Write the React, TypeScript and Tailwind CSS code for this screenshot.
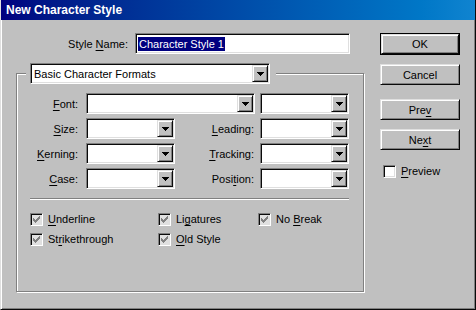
import React from 'react';

const sunken =
  'border border-t-[#808080] border-l-[#808080] border-b-white border-r-white shadow-[inset_1px_1px_0_#0a0a0a,inset_-1px_-1px_0_#dfdfdf]';
const raised =
  'border border-t-[#dfdfdf] border-l-[#dfdfdf] border-b-[#0a0a0a] border-r-[#0a0a0a] shadow-[inset_1px_1px_0_#fff,inset_-1px_-1px_0_#808080]';
const etched = 'border border-[#808080] shadow-[inset_1px_1px_0_#fff,1px_1px_0_#fff]';

const Key: React.FC<{ children: React.ReactNode }> = ({ children }) => (
  <u className="underline underline-offset-[2px]">{children}</u>
);

const Arrow = () => (
  <svg width="7" height="4" viewBox="0 0 7 4" shapeRendering="crispEdges">
    <path d="M0 0h7v1h-1v1h-1v1h-1v1h-1v-1h-1v-1h-1v-1h-1z" fill="#000" />
  </svg>
);

const Combo: React.FC<{ w: string; children?: React.ReactNode }> = ({ w, children }) => (
  <div className={`flex h-[21px] ${w} bg-white p-[1px] ${sunken}`}>
    <div className="flex flex-1 items-center overflow-hidden pl-[2px] whitespace-nowrap">{children}</div>
    <div className={`flex w-[16px] items-center justify-center bg-[#c0c0c0] ${raised}`}>
      <Arrow />
    </div>
  </div>
);

const CheckMark: React.FC<{ color: string }> = ({ color }) => (
  <svg width="7" height="7" viewBox="0 0 7 7" shapeRendering="crispEdges">
    <path
      d="M6 0h1v3h-1v1h-1v1h-1v1h-1v1h-1v-1h-1v-1h-1v-3h1v1h1v1h1v-1h1v-1h1v-1h1z"
      fill={color}
    />
  </svg>
);

const Check: React.FC<{ checked?: boolean; disabled?: boolean }> = ({ checked, disabled }) => (
  <div
    className={`flex h-[13px] w-[13px] shrink-0 items-center justify-center ${sunken} ${
      disabled ? 'bg-[#e0e0e0]' : 'bg-white'
    }`}
  >
    {checked && <CheckMark color={disabled ? '#808080' : '#000'} />}
  </div>
);

const CheckItem: React.FC<{ w: string; children: React.ReactNode }> = ({ w, children }) => (
  <div className={`flex h-[20px] ${w} items-center gap-[5px]`}>
    <Check checked disabled />
    <span>{children}</span>
  </div>
);

const Btn: React.FC<{ children: React.ReactNode; className?: string }> = ({ children, className = '' }) => (
  <div className={`flex h-[21px] w-[80px] items-center justify-center bg-[#c0c0c0] ${raised} ${className}`}>
    {children}
  </div>
);

export default function App() {
  return (
    <div className="h-[310px] w-[476px] overflow-hidden border-b border-l border-r border-b-[#0a0a0a] border-l-[#dfdfdf] border-r-[#0a0a0a] bg-[#c0c0c0] font-['Liberation_Sans',Arial,sans-serif] text-[11px] leading-[14px] text-black shadow-[inset_1px_0_0_#fff,inset_-1px_-1px_0_#808080]">
      <div className="flex h-[20px] items-center bg-gradient-to-r from-[#000080] to-[#1084d0] pl-[5px] text-[12px] font-bold text-white">
        New Character Style
      </div>

      <div className="flex">
        {/* left column */}
        <div className="pl-[15px]">
          <div className="mt-[13px] flex items-center">
            <div className="w-[112px] text-right">
              Style <Key>N</Key>ame:
            </div>
            <div className={`ml-[7px] flex h-[21px] w-[215px] items-center bg-white pl-[2px] ${sunken}`}>
              <span className="bg-[#000080] px-[1px] text-white">Character Style 1</span>
            </div>
          </div>

          <div className={`mt-[19px] h-[219px] w-[348px] ${etched}`}>
            <div className="-mt-[11px] ml-[9px] w-fit bg-[#c0c0c0] pl-[4px] pr-[6px]">
              <Combo w="w-[240px]">Basic Character Formats</Combo>
            </div>

            <div className="mt-[9px] flex flex-col gap-[4px] pl-[13px]">
              <div className="flex items-center">
                <div className="w-[48px] text-right">
                  <Key>F</Key>ont:
                </div>
                <div className="ml-[8px]">
                  <Combo w="w-[169px]" />
                </div>
                <div className="ml-[5px]">
                  <Combo w="w-[89px]" />
                </div>
              </div>
              <div className="flex items-center">
                <div className="w-[48px] text-right">
                  <Key>S</Key>ize:
                </div>
                <div className="ml-[8px]">
                  <Combo w="w-[89px]" />
                </div>
                <div className="w-[79px] text-right">
                  <Key>L</Key>eading:
                </div>
                <div className="ml-[6px]">
                  <Combo w="w-[89px]" />
                </div>
              </div>
              <div className="flex items-center">
                <div className="w-[48px] text-right">
                  <Key>K</Key>erning:
                </div>
                <div className="ml-[8px]">
                  <Combo w="w-[89px]" />
                </div>
                <div className="w-[79px] text-right">
                  <Key>T</Key>racking:
                </div>
                <div className="ml-[6px]">
                  <Combo w="w-[89px]" />
                </div>
              </div>
              <div className="flex items-center">
                <div className="w-[48px] text-right">
                  <Key>C</Key>ase:
                </div>
                <div className="ml-[8px]">
                  <Combo w="w-[89px]" />
                </div>
                <div className="w-[79px] text-right">
                  Posi<Key>t</Key>ion:
                </div>
                <div className="ml-[6px]">
                  <Combo w="w-[89px]" />
                </div>
              </div>
            </div>

            <div className={`ml-[13px] mt-[9px] h-0 w-[319px] border-t border-t-[#808080] border-b border-b-white`} />

            <div className="mt-[9px] pl-[13px]">
              <div className="flex">
                <CheckItem w="w-[128px]">
                  <Key>U</Key>nderline
                </CheckItem>
                <CheckItem w="w-[100px]">
                  Li<Key>g</Key>atures
                </CheckItem>
                <CheckItem w="w-[100px]">
                  No <Key>B</Key>reak
                </CheckItem>
              </div>
              <div className="flex">
                <CheckItem w="w-[128px]">
                  St<Key>r</Key>ikethrough
                </CheckItem>
                <CheckItem w="w-[100px]">
                  <Key>O</Key>ld Style
                </CheckItem>
              </div>
            </div>
          </div>
        </div>

        {/* right column */}
        <div className="ml-[16px] flex flex-col">
          <div className="mt-[13px] h-[22px] w-[80px] border border-black">
            <div className={`flex h-full w-full items-center justify-center bg-[#c0c0c0] ${raised}`}>OK</div>
          </div>
          <Btn className="mt-[9px]">Cancel</Btn>
          <Btn className="mt-[14px]">
            Pre<Key>v</Key>
          </Btn>
          <Btn className="mt-[9px]">
            Ne<Key>x</Key>t
          </Btn>
          <div className="ml-[3px] mt-[14px] flex items-center gap-[5px]">
            <div className={`h-[13px] w-[13px] bg-white ${sunken}`} />
            <span>
              <Key>P</Key>review
            </span>
          </div>
        </div>
      </div>
    </div>
  );
}
